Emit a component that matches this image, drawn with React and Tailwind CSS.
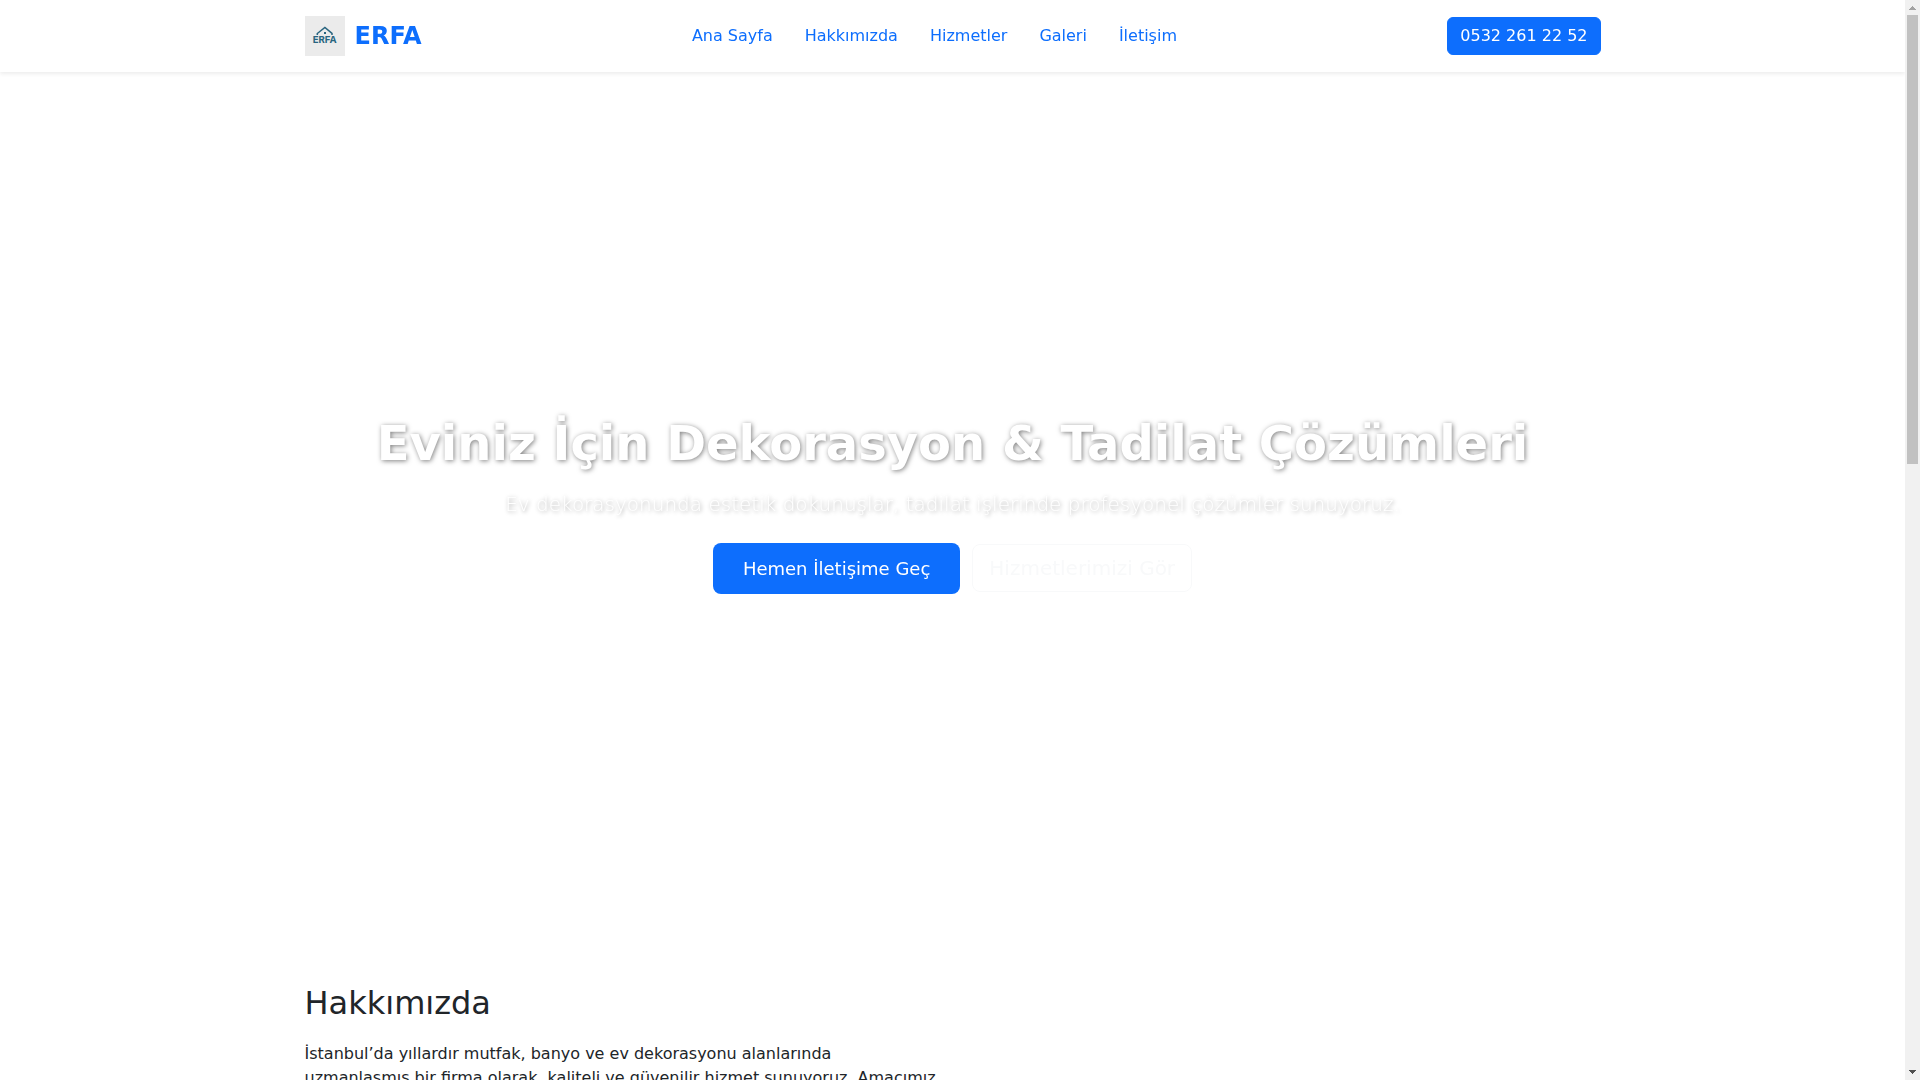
import React from 'react';

const navItems = [
  { id: 'home', label: 'Ana Sayfa' },
  { id: 'about', label: 'Hakkımızda' },
  { id: 'services', label: 'Hizmetler' },
  { id: 'gallery', label: 'Galeri' },
  { id: 'contact', label: 'İletişim' },
];

const Logo = () => (
  <svg viewBox="0 0 40 40" className="w-10 h-10" aria-hidden="true">
    <rect width="40" height="40" fill="#ebebeb" />
    <path
      d="M12.3 19V17.5L19.9 11.4L27 17.3V19"
      fill="none"
      stroke="#28647f"
      strokeWidth="1.5"
    />
    <rect x="19" y="16" width="2" height="2" fill="#28647f" />
    <text
      x="19.7"
      y="27.3"
      textAnchor="middle"
      fontFamily="Inter, 'Liberation Sans', sans-serif"
      fontSize="9.6"
      fontWeight="700"
      fill="#28647f"
    >
      ERFA
    </text>
  </svg>
);

const Navbar = () => (
  <header className="sticky top-0 z-10 bg-white py-4 shadow-[0_2px_4px_rgba(0,0,0,0.075)]">
    <div className="max-w-[1320px] mx-auto px-3 flex items-center justify-between">
      <a href="#home" className="flex items-center gap-2.5 text-2xl font-bold text-[#0d6efd]">
        <Logo />
        ERFA
      </a>
      <nav>
        <ul className="flex gap-4">
          {navItems.map((item) => (
            <li key={item.id}>
              <a href={`#${item.id}`} className="px-2 text-[#0d6efd]">
                {item.label}
              </a>
            </li>
          ))}
        </ul>
      </nav>
      <a
        href="tel:05322612252"
        className="rounded-md border border-[#0d6efd] bg-[#0d6efd] px-3 py-1.5 text-white"
      >
        0532 261 22 52
      </a>
    </div>
  </header>
);

const Hero = () => (
  <section
    id="home"
    className="min-h-[80vh] flex flex-col items-center justify-center text-center will-change-transform"
  >
    <h1 className="mb-[18px] text-5xl leading-14 font-bold text-white [text-shadow:1px_1px_5px_rgba(0,0,0,0.5)]">
      Eviniz İçin Dekorasyon &amp; Tadilat Çözümleri
    </h1>
    <p className="mb-6 text-xl leading-[30px] font-light text-white [text-shadow:1px_1px_4px_rgba(0,0,0,0.4)]">
      Ev dekorasyonunda estetik dokunuşlar, tadilat işlerinde profesyonel çözümler sunuyoruz.
    </p>
    <div className="flex items-center gap-3">
      <a href="#contact" className="rounded-lg bg-[#0d6efd] px-[30px] py-3 text-lg leading-[27px] text-white">
        Hemen İletişime Geç
      </a>
      <a
        href="#services"
        className="rounded-lg border border-[#f8f9fa] px-4 py-2 text-xl leading-[30px] text-[#f8f9fa]"
      >
        Hizmetlerimizi Gör
      </a>
    </div>
  </section>
);

const About = () => (
  <section id="about" className="py-12">
    <div className="max-w-[1320px] mx-auto px-3 grid grid-cols-2 gap-6">
      <div>
        <h2 className="mb-5 text-[32px] leading-[38px]">Hakkımızda</h2>
        <p>
          İstanbul’da yıllardır mutfak, banyo ve ev dekorasyonu alanlarında uzmanlaşmış bir firma
          olarak, kaliteli ve güvenilir hizmet sunuyoruz. Amacımız
        </p>
      </div>
    </div>
  </section>
);

const Scrollbar = () => (
  <div className="w-[15px] h-full flex flex-col items-center bg-[#f1f1f1]" aria-hidden="true">
    <svg viewBox="0 0 15 15" className="w-[15px] h-[15px]" shapeRendering="crispEdges">
      <path d="M4 10L7.5 6L11 10Z" fill="#a3a3a3" />
    </svg>
    <div className="flex-1 w-[11px]">
      <div className="h-[42.8%] bg-[#c1c1c1]" />
    </div>
    <svg viewBox="0 0 15 15" className="w-[15px] h-[15px]" shapeRendering="crispEdges">
      <path d="M4 5L7.5 9L11 5Z" fill="#505050" />
    </svg>
  </div>
);

export default function App() {
  return (
    <div className="h-screen flex bg-white text-base text-[#212529] font-['DejaVu_Sans',sans-serif]">
      <div className="flex-1 min-w-0 overflow-y-auto">
        <Navbar />
        <main>
          <Hero />
          <About />
        </main>
      </div>
      <Scrollbar />
    </div>
  );
}
